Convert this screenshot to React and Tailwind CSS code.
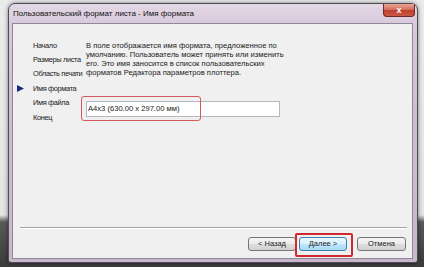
export default function App() {
  const nav = [
    { t: "Начало" },
    { t: "Размеры листа" },
    { t: "Область печати" },
    { t: "Имя формата", active: true },
    { t: "Имя файла" },
    { t: "Конец" },
  ];
  return (
    <div className="w-[424px] h-[267px] overflow-hidden bg-[linear-gradient(to_bottom,#ebebeb_0px,#e4e4e4_215px,#5a5a5a_222px,#3a3a3a_267px)] pl-[8px] pt-[3px] font-['Liberation_Sans',Arial,sans-serif] text-black">
      <div className="w-[410px] h-[260px] rounded-t-[7px] rounded-b-[3px] border border-[#4f4a55] bg-[linear-gradient(to_bottom,#e3d8e6_0px,#d8c9dc_20px,#cdbcd1_120px,#c9b6cc_260px)] flex flex-col pl-[3px] pr-[4px] pb-[3px] shadow-[0_0_4px_rgba(0,0,0,0.5)]">
        <div className="h-[19px] flex items-start justify-between">
          <span className="pl-[1px] pt-[5px] text-[8px] leading-[10px] text-[#111]">
            Пользовательский формат листа - Имя формата
          </span>
          <div className="-mr-[2px] w-[32px] h-[13px] rounded-b-[4px] border border-t-0 border-[#6e2a22] bg-[linear-gradient(to_bottom,#e9a595_0%,#d47060_45%,#c0402e_55%,#c85a45_100%)] flex items-center justify-center">
            <span className="text-white text-[9px] font-bold leading-none">x</span>
          </div>
        </div>
        <div className="flex-1 bg-[#f0f0f0] border border-[#8f8896] flex flex-col">
          <div className="flex pt-[14px] pl-[4px]">
            <div className="w-[69px] shrink-0 flex flex-col">
              {nav.map((n) => (
                <div key={n.t} className="flex items-center h-[14.4px]">
                  <div className="w-[16px] shrink-0 flex items-center">
                    {n.active && (
                      <svg width="7" height="7" viewBox="0 0 7 7">
                        <polygon points="0,0 7,3.5 0,7" fill="#1c2a86" />
                      </svg>
                    )}
                  </div>
                  <span className="text-[7.4px] tracking-[-0.35px] whitespace-nowrap text-[#1a1a1a]">{n.t}</span>
                </div>
              ))}
            </div>
            <div className="flex flex-col">
              <p className="mt-[2.5px] w-[202px] text-[7.6px] leading-[9.3px] text-[#1a1a1a]">
                В поле отображается имя формата, предложенное по умолчанию. Пользователь может принять или изменить его. Это имя заносится в список пользовательских форматов Редактора параметров плоттера.
              </p>
              <div className="relative mt-[23.5px] w-[194px] h-[16px] bg-white border border-[#b5b8c0] flex items-center pl-[1px]">
                <span className="text-[7.6px] text-[#1a1a1a] whitespace-nowrap">A4x3 (630.00 x 297.00 мм)</span>
                <div className="absolute -left-[6px] -top-[6px] w-[120px] h-[25px] rounded-[3px] border-[1.5px] border-[#d4585c]" />
              </div>
            </div>
          </div>
          <div className="flex-1" />
          <div className="ml-[7px] mr-[5px] h-[2px] border-t border-[#a3a3a3] border-b border-b-white" />
          <div className="flex justify-end mr-[6px] mt-[8px] mb-[7px]">
            <div className="w-[48px] h-[14px] rounded-[3px] border border-[#767676] bg-[linear-gradient(to_bottom,#f4f4f4_0%,#ebebeb_50%,#dddddd_51%,#d2d2d2_100%)] flex items-center justify-center text-[7.5px] text-[#222]">
              &lt; Назад
            </div>
            <div className="relative ml-[3px] w-[48px] h-[14px] rounded-[3px] border border-[#3c7fb1] bg-[linear-gradient(to_bottom,#eaf6fd_0%,#d9f0fc_50%,#bee6fd_51%,#a7d9f5_100%)] flex items-center justify-center text-[7.5px] text-[#222]">
              Далее &gt;
              <div className="absolute -left-[5px] -top-[5px] w-[58px] h-[24px] rounded-[2px] border-2 border-[#d0282f]" />
            </div>
            <div className="ml-[10px] w-[49px] h-[14px] rounded-[3px] border border-[#767676] bg-[linear-gradient(to_bottom,#f4f4f4_0%,#ebebeb_50%,#dddddd_51%,#d2d2d2_100%)] flex items-center justify-center text-[7.5px] text-[#222]">
              Отмена
            </div>
          </div>
        </div>
      </div>
    </div>
  );
}
